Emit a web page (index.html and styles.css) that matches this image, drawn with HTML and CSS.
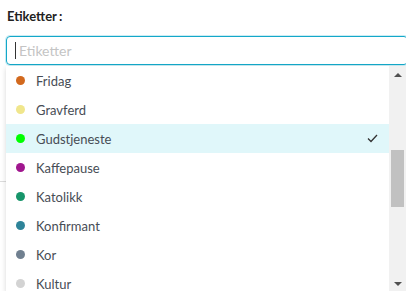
FILE: index.html
```html
<!doctype html>
<html lang="nb">
<head>
	<meta charset="UTF-8">
	<title>Etiketter</title>
	<link rel="stylesheet" href="styles.css">
</head>
<body>
	<div class="form">
		<div class="field">
			<label class="field-label" for="tags">Etiketter<span class="colon">:</span></label>
			<div class="select">
				<div class="select-input">
					<span class="caret"></span>
					<input id="tags" type="text" placeholder="Etiketter">
				</div>
				<div class="dropdown">
					<ul class="options">
						<li><span class="dot" style="background:#d2691e"></span>Fridag</li>
						<li><span class="dot" style="background:#f0e68c"></span>Gravferd</li>
						<li class="selected"><span class="dot" style="background:#00ff00"></span>Gudstjeneste
							<svg class="check" width="11" height="9" viewBox="0 0 11 9"><path d="M1 4.5 L4 7.5 L10 1" fill="none" stroke="#333" stroke-width="1.3"/></svg>
						</li>
						<li><span class="dot" style="background:#a0168e"></span>Kaffepause</li>
						<li><span class="dot" style="background:#17956a"></span>Katolikk</li>
						<li><span class="dot" style="background:#2e8499"></span>Konfirmant</li>
						<li><span class="dot" style="background:#708090"></span>Kor</li>
						<li><span class="dot" style="background:#d3d3d3"></span>Kultur</li>
					</ul>
					<div class="scrollbar">
						<div class="sb-btn"><span class="arrow-up"></span></div>
						<div class="sb-track"><div class="sb-thumb"></div></div>
						<div class="sb-btn"><span class="arrow-down"></span></div>
					</div>
				</div>
			</div>
		</div>
		<div class="divider"></div>
	</div>
</body>
</html>
```

FILE: styles.css
```css
html, body {
	margin: 0;
	padding: 0;
	overflow: hidden;
	background: #fff;
}
body {
	font-family: Lato, "Liberation Sans", sans-serif;
	color: #474d55;
}
.form {
	width: 406px;
	height: 291px;
}
.field {
	padding: 9px 0 0 6px;
}
.field-label {
	display: block;
	margin-left: 1px;
	font-size: 13px;
	font-weight: bold;
	line-height: 14px;
	color: #222;
}
.colon {
	margin-left: 2px;
}
.select {
	position: relative;
	margin-top: 13px;
	width: 402px;
}
.select-input {
	display: flex;
	align-items: center;
	height: 27px;
	border: 1px solid #14a8c9;
	border-radius: 4px;
	box-shadow: 0 0 0 1px #c9ecf4;
	padding-left: 8px;
}
.caret {
	width: 1px;
	height: 17px;
	background: #333;
}
.select-input input {
	flex: 1;
	border: 0;
	outline: 0;
	padding: 0 0 0 3px;
	font-family: Lato, "Liberation Sans", sans-serif;
	font-size: 14px;
	color: #333;
	background: transparent;
}
.select-input input::placeholder {
	color: #c4c4c4;
}
.dropdown {
	position: absolute;
	top: 30px;
	left: 0;
	width: 400px;
	height: 226px;
	display: flex;
	background: #fff;
	box-shadow: 0 2px 5px rgba(0,0,0,.16);
	overflow: hidden;
}
.options {
	flex: 1;
	list-style: none;
	margin: 0;
	padding: 0;
}
.options li {
	display: flex;
	align-items: center;
	height: 29px;
	padding: 0 11px 0 10px;
	font-size: 13px;
}
.options li.selected {
	background: #e0f7fa;
}
.dot {
	width: 9px;
	height: 9px;
	border-radius: 50%;
	margin-right: 11px;
}
.check {
	margin-left: auto;
}
.scrollbar {
	width: 17px;
	display: flex;
	flex-direction: column;
	background: #f1f1f1;
}
.sb-btn {
	height: 17px;
	display: flex;
	align-items: center;
	justify-content: center;
}
.sb-track {
	flex: 1;
}
.sb-thumb {
	margin: 67px 2px 0 2px;
	height: 57px;
	background: #c1c1c1;
}
.arrow-up {
	width: 0;
	height: 0;
	border-left: 4px solid transparent;
	border-right: 4px solid transparent;
	border-bottom: 4px solid #505050;
}
.arrow-down {
	width: 0;
	height: 0;
	border-left: 4px solid transparent;
	border-right: 4px solid transparent;
	border-top: 4px solid #505050;
}
.divider {
	margin-top: 116px;
	height: 1px;
	background: #dcdcdc;
}
```
